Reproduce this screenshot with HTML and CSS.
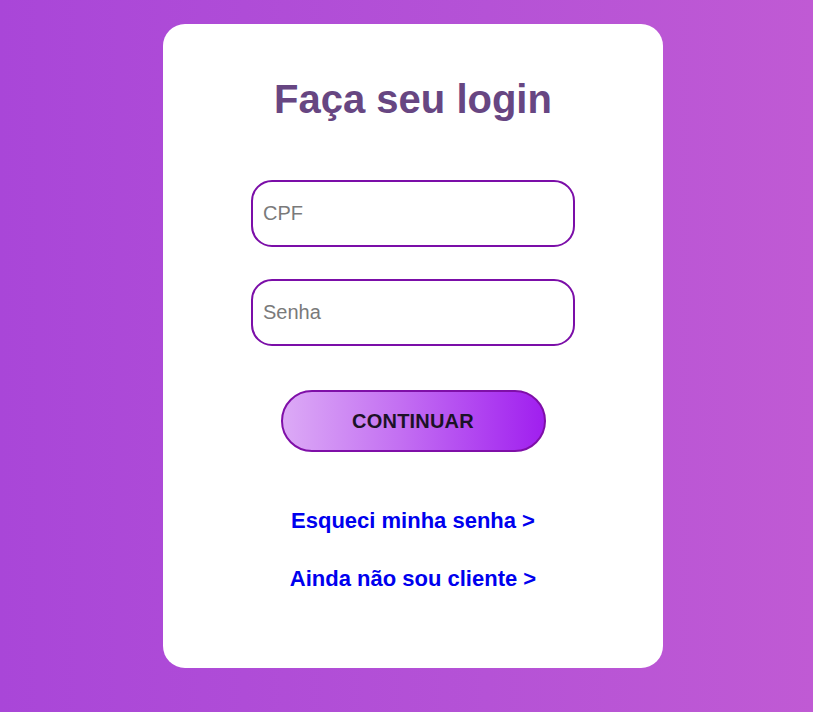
FILE: index.html
```html
<!DOCTYPE html>
<html lang="pt-BR">
<head>
<meta charset="utf-8">
<title>Login</title>
<link rel="stylesheet" href="styles.css">
</head>
<body>
<main class="page">
  <section class="card">
    <h1 class="title">Faça seu login</h1>
    <form class="form">
      <input class="field" type="text" placeholder="CPF">
      <input class="field field-second" type="password" placeholder="Senha">
      <button class="btn" type="button">CONTINUAR</button>
    </form>
    <a class="link link-first" href="#">Esqueci minha senha &gt;</a>
    <a class="link link-second" href="#">Ainda não sou cliente &gt;</a>
  </section>
</main>
</body>
</html>
```

FILE: styles.css
```css
* { box-sizing: border-box; }
html, body { margin: 0; height: 100%; }
body {
  font-family: "Liberation Sans", Arial, sans-serif;
  background: linear-gradient(90deg, #a946d8 0%, #b552d6 60%, #c05ad4 100%);
}
.page {
  min-height: 712px;
  display: flex;
  justify-content: center;
  padding-top: 24px;
  padding-left: 13px;
}
.card {
  width: 500px;
  height: 644px;
  background: #fff;
  border-radius: 22px;
  display: flex;
  flex-direction: column;
  align-items: center;
  padding-top: 52px;
}
.title {
  margin: 0;
  font-size: 40px;
  line-height: 46px;
  font-weight: 700;
  color: #674682;
}
.form {
  display: flex;
  flex-direction: column;
  align-items: center;
  margin-top: 58px;
}
.field {
  width: 324px;
  height: 67px;
  border: 2px solid #7b0ea8;
  border-radius: 21px;
  padding: 0 10px;
  font-family: "Liberation Sans", Arial, sans-serif;
  font-size: 20px;
  color: #333;
  outline: none;
  background: #fff;
}
.field::placeholder { color: #7a7a7a; }
.field-second { margin-top: 32px; }
.btn {
  margin-top: 44px;
  width: 265px;
  height: 62px;
  border: 2px solid #7f0fa8;
  border-radius: 31px;
  background: linear-gradient(90deg, #dcaaf6 0%, #c36ff2 45%, #a01fef 100%);
  font-family: "Liberation Sans", Arial, sans-serif;
  font-size: 20px;
  font-weight: 700;
  color: #1c1226;
  letter-spacing: 0.2px;
  cursor: pointer;
}
.link {
  font-size: 22px;
  line-height: 25px;
  font-weight: 700;
  color: #0000ee;
  text-decoration: none;
}
.link-first { margin-top: 56px; }
.link-second { margin-top: 33px; }
```
